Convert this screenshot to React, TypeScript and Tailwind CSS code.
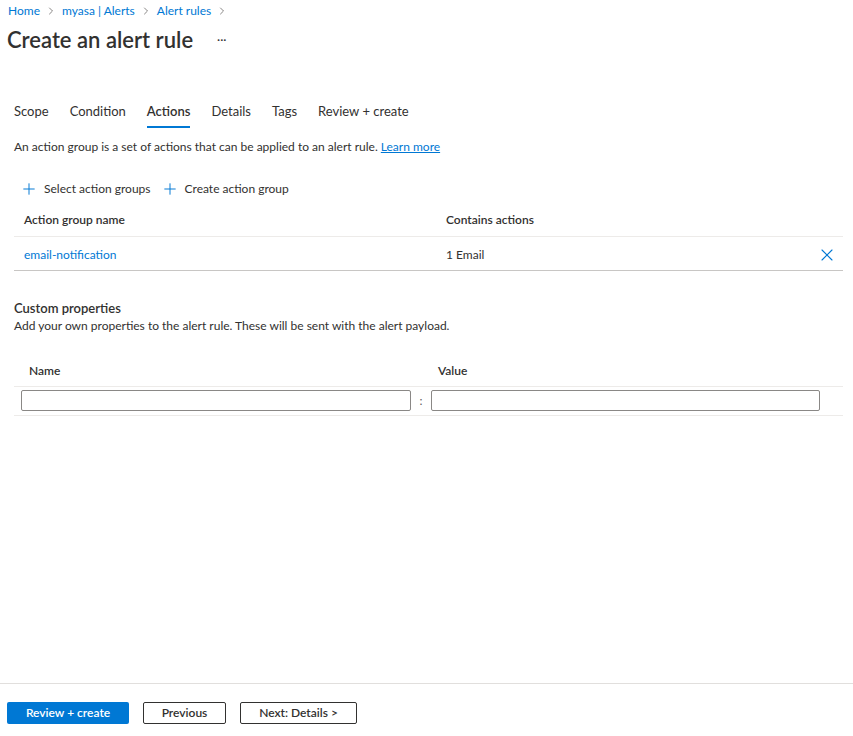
import { Plus, X, ChevronRight } from 'lucide-react';

const tabs = ['Scope', 'Condition', 'Actions', 'Details', 'Tags', 'Review + create'];
const crumbs = ['Home', 'myasa | Alerts', 'Alert rules'];

export default function App() {
  return (
    <div className="flex h-[736px] w-[853px] flex-col bg-white text-[#323130] font-['Segoe_UI',Lato,sans-serif]">
      <div className="flex-1">
        {/* breadcrumb */}
        <div className="flex items-center gap-[5px] pl-[8px] pt-[2px] text-[12px] text-[#0078d4]">
          {crumbs.map((c) => (
            <span key={c} className="flex items-center gap-[5px]">
              {c}
              <ChevronRight size={12} className="text-[#605e5c]" strokeWidth={1.5} />
            </span>
          ))}
        </div>
        <div className="flex items-center pl-[7px] pt-[3px]">
          <h1 className="text-[22px] font-semibold">Create an alert rule</h1>
          <span className="ml-[24px] text-[12px] text-[#323130]">···</span>
        </div>

        {/* tabs */}
        <div className="mt-[46px] flex gap-[21px] pl-[14px] text-[13px]">
          {tabs.map((t) => (
            <div key={t} className="flex flex-col">
              <span className={t === 'Actions' ? 'font-semibold' : ''}>{t}</span>
              <span className={`mt-[4px] h-[2px] ${t === 'Actions' ? 'bg-[#0078d4]' : 'bg-transparent'}`} />
            </div>
          ))}
        </div>

        <p className="mt-[10px] pl-[14px] text-[12px]">
          An action group is a set of actions that can be applied to an alert rule.{' '}
          <span className="text-[#0078d4] underline">Learn more</span>
        </p>

        {/* command bar */}
        <div className="mt-[24px] flex items-center gap-[10px] pl-[20px] text-[12px]">
          <span className="flex items-center gap-[6px]">
            <Plus size={18} strokeWidth={1.3} className="text-[#0078d4]" />
            Select action groups
          </span>
          <span className="flex items-center gap-[6px]">
            <Plus size={18} strokeWidth={1.3} className="text-[#0078d4]" />
            Create action group
          </span>
        </div>

        {/* action group table */}
        <div className="ml-[14px] mr-[10px] mt-[6px] text-[12px]">
          <div className="grid h-[33px] grid-cols-[432px_1fr_44px] items-center border-b border-[#edebe9] font-semibold">
            <span className="pl-[10px]">Action group name</span>
            <span>Contains actions</span>
            <span />
          </div>
          <div className="grid h-[34px] grid-cols-[432px_1fr_44px] items-center border-b border-[#c8c6c4] pt-[3px]">
            <span className="pl-[10px] text-[#0078d4]">email-notification</span>
            <span>1 Email</span>
            <X size={20} strokeWidth={1.3} className="ml-[18px] text-[#0078d4]" />
          </div>
        </div>

        {/* custom properties */}
        <div className="mt-[28px] pl-[14px]">
          <h2 className="text-[13px] leading-[18px] font-semibold">Custom properties</h2>
          <p className="text-[12px]">Add your own properties to the alert rule. These will be sent with the alert payload.</p>
        </div>

        <div className="ml-[14px] mr-[10px] mt-[21px] text-[12px]">
          <div className="grid h-[31px] grid-cols-[409px_1fr] items-center border-b border-[#edebe9] font-semibold">
            <span className="pl-[15px]">Name</span>
            <span className="pl-[15px]">Value</span>
          </div>
          <div className="flex h-[29px] items-center border-b border-[#edebe9] pl-[7px]">
            <input className="h-[21px] w-[390px] rounded-[2px] border border-[#8a8886] outline-none" />
            <span className="w-[20px] text-center text-[12px] text-[#605e5c]">:</span>
            <input className="h-[21px] w-[389px] rounded-[2px] border border-[#8a8886] outline-none" />
          </div>
        </div>
      </div>

      {/* footer */}
      <div className="flex h-[53px] items-start gap-[14px] border-t border-[#e1dfdd] pl-[7px] pt-[18px] text-[12px]">
        <button className="h-[22px] w-[122px] rounded-[2px] bg-[#0078d4] font-semibold text-white">Review + create</button>
        <button className="h-[22px] w-[83px] rounded-[2px] border border-[#323130] font-semibold">Previous</button>
        <button className="h-[22px] w-[117px] rounded-[2px] border border-[#323130] font-semibold">Next: Details &gt;</button>
      </div>
    </div>
  );
}
